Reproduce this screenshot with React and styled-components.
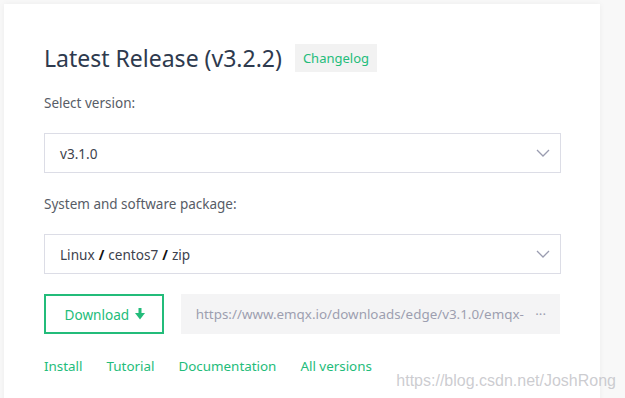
import styled, { createGlobalStyle } from 'styled-components'

const GlobalStyle = createGlobalStyle`
  html, body {
    margin: 0;
    padding: 0;
    background: #f7f7f7;
    font-family: "Noto Sans", "Open Sans", sans-serif;
  }
`

const Page = styled.div`
  position: relative;
  width: 625px;
  height: 398px;
  overflow: hidden;
  padding: 4px 0 0 4px;
  box-sizing: border-box;
  background: #f8f8f8;
`

const Card = styled.div`
  width: 596px;
  min-height: 420px;
  background: #fff;
  box-shadow: 0 0 6px rgba(0, 0, 0, 0.05);
  padding: 40px 40px 0 40px;
  box-sizing: border-box;
`

const TitleRow = styled.div`
  display: flex;
  align-items: center;
  gap: 13px;
`

const Title = styled.h1`
  margin: 0;
  font-size: 23px;
  font-weight: 400;
  color: #2e3a4e;
  line-height: 28px;
`

const Badge = styled.span`
  background: #f2f2f2;
  color: #23bc7a;
  font-size: 13px;
  line-height: 28px;
  padding: 0 8px;
`

const Label = styled.div`
  font-size: 13.5px;
  color: #575c66;
  margin-top: ${props => props.top}px;
  line-height: 18px;
`

const Select = styled.div`
  margin-top: 21px;
  width: 517px;
  height: 40px;
  box-sizing: border-box;
  border: 1px solid #dcdde6;
  display: flex;
  align-items: center;
  justify-content: space-between;
  padding: 0 10px 0 15px;
  font-size: 13.6px;
  color: #3d424d;
`

const Sep = styled.span`
  color: #111;
  font-weight: 700;
  margin: 0 4px;
`

const ActionRow = styled.div`
  display: flex;
  gap: 17px;
  margin-top: 20px;
`

const DownloadBtn = styled.button`
  width: 120px;
  height: 40px;
  box-sizing: border-box;
  border: 2px solid #23bc7a;
  background: #fff;
  color: #23bc7a;
  font-family: inherit;
  font-size: 13.6px;
  display: flex;
  align-items: center;
  justify-content: center;
  gap: 6px;
  padding: 0 0 0 2px;
`

const UrlBox = styled.div`
  width: 380px;
  height: 40px;
  background: #f4f4f5;
  display: flex;
  align-items: center;
  justify-content: space-between;
  padding: 0 14px 0 15px;
  box-sizing: border-box;
  font-size: 13.4px;
  color: #9d9fb0;
`

const Links = styled.div`
  display: flex;
  gap: 24px;
  margin-top: 23px;
`

const Link = styled.a`
  font-size: 13.4px;
  color: #23bc7a;
  text-decoration: none;
`

const Watermark = styled.div`
  position: absolute;
  right: 9px;
  bottom: 8px;
  font-family: "Liberation Sans", Arial, sans-serif;
  font-size: 16px;
  color: rgba(195, 195, 200, 0.85);
`

const Chevron = () => (
  <svg width="14" height="8" viewBox="0 0 14 8">
    <path d="M1 1l6 6 6-6" fill="none" stroke="#9a9cb0" strokeWidth="1.3" />
  </svg>
)

const ArrowDown = () => (
  <svg width="10" height="12" viewBox="0 0 10 12">
    <path d="M5 0v7" stroke="#23bc7a" strokeWidth="3" />
    <path d="M0 5l5 6.5L10 5z" fill="#23bc7a" />
  </svg>
)

const App = () => {
  return (
    <Page>
      <GlobalStyle />
      <Card>
        <TitleRow>
          <Title>Latest Release (v3.2.2)</Title>
          <Badge>Changelog</Badge>
        </TitleRow>
        <Label top={22}>Select version:</Label>
        <Select>
          <span>v3.1.0</span>
          <Chevron />
        </Select>
        <Label top={22}>System and software package:</Label>
        <Select>
          <span>Linux<Sep>/</Sep>centos7<Sep>/</Sep>zip</span>
          <Chevron />
        </Select>
        <ActionRow>
          <DownloadBtn>
            Download <ArrowDown />
          </DownloadBtn>
          <UrlBox>
            <span>https://www.emqx.io/downloads/edge/v3.1.0/emqx-</span>
            <span>···</span>
          </UrlBox>
        </ActionRow>
        <Links>
          <Link>Install</Link>
          <Link>Tutorial</Link>
          <Link>Documentation</Link>
          <Link>All versions</Link>
        </Links>
      </Card>
      <Watermark>https://blog.csdn.net/JoshRong</Watermark>
    </Page>
  )
}

export default App
